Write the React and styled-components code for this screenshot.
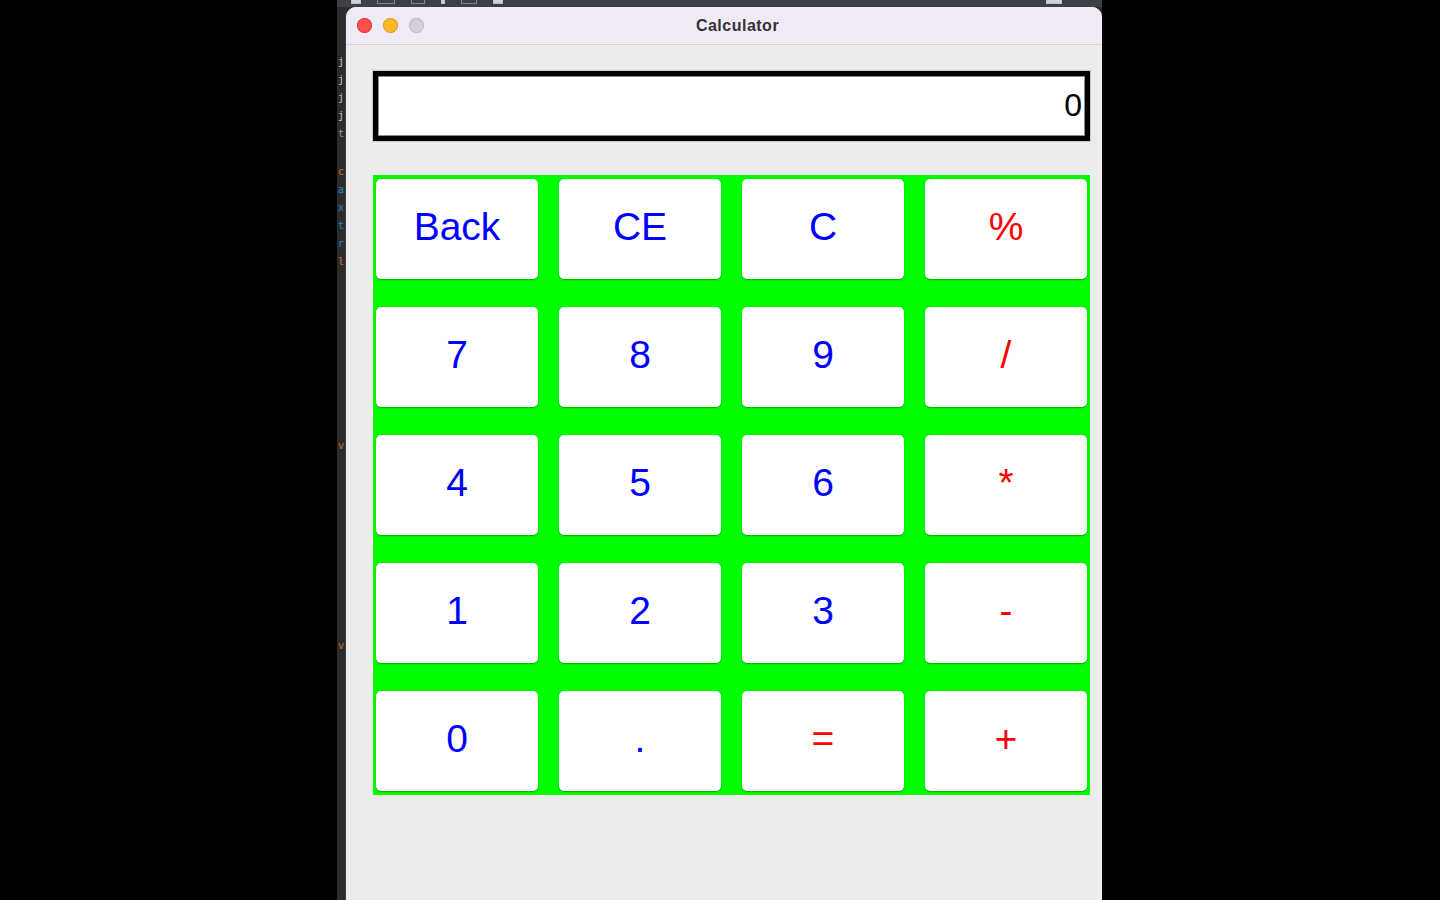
import React, { useState } from 'react';
import styled, { createGlobalStyle } from 'styled-components';

const GlobalStyle = createGlobalStyle`
  html, body {
    margin: 0;
    padding: 0;
    background: #000000;
    overflow: hidden;
  }
  * {
    box-sizing: border-box;
  }
`;

const KEYS = [
  { label: 'Back', op: false },
  { label: 'CE', op: false },
  { label: 'C', op: false },
  { label: '%', op: true },
  { label: '7', op: false },
  { label: '8', op: false },
  { label: '9', op: false },
  { label: '/', op: true },
  { label: '4', op: false },
  { label: '5', op: false },
  { label: '6', op: false },
  { label: '*', op: true },
  { label: '1', op: false },
  { label: '2', op: false },
  { label: '3', op: false },
  { label: '-', op: true },
  { label: '0', op: false },
  { label: '.', op: false },
  { label: '=', op: true },
  { label: '+', op: true },
];

// bits of the code editor peeking out behind the window
const EDITOR_LINES = [
  { top: 48, text: 'j', color: '#c8c8c8' },
  { top: 66, text: 'j', color: '#c8c8c8' },
  { top: 84, text: 'j', color: '#c8c8c8' },
  { top: 102, text: 'j', color: '#c8c8c8' },
  { top: 120, text: 't', color: '#9a9a9a' },
  { top: 158, text: 'c', color: '#cc7832' },
  { top: 176, text: 'a', color: '#1d8cc4' },
  { top: 194, text: 'x', color: '#1d8cc4' },
  { top: 212, text: 't', color: '#1d8cc4' },
  { top: 230, text: 'r', color: '#1d8cc4' },
  { top: 248, text: 'l', color: '#cc7832' },
  { top: 432, text: 'v', color: '#cc7832' },
  { top: 632, text: 'v', color: '#cc7832' },
];

function App() {
  const [display] = useState('0');

  return (
    <>
      <GlobalStyle />
      <Desktop>
        <Screen>
          <Toolbar>
            <ToolIcon $w={10} $light />
            <ToolIcon $w={18} />
            <ToolIcon $w={14} />
            <ToolIcon $w={4} $light />
            <ToolIcon $w={16} />
            <ToolIcon $w={10} $light />
            <ToolSpacer />
            <ToolIcon $w={16} $light />
          </Toolbar>
          <Workspace>
            <EditorStrip>
              {EDITOR_LINES.map((line, i) => (
                <EditorLine key={i} $top={line.top} $color={line.color}>
                  {line.text}
                </EditorLine>
              ))}
            </EditorStrip>
            <Window>
              <TitleBar>
                <Lights>
                  <Light $color="#fe4f4b" $edge="#e2403c" />
                  <Light $color="#fdb92c" $edge="#e0a026" />
                  <Light $color="#d4d0d9" $edge="#bdb9c2" />
                </Lights>
                <Title>Calculator</Title>
              </TitleBar>
              <Content>
                <Display>{display}</Display>
                <Keypad>
                  {KEYS.map((key) => (
                    <Key key={key.label} $op={key.op}>
                      {key.label}
                    </Key>
                  ))}
                </Keypad>
              </Content>
            </Window>
          </Workspace>
        </Screen>
      </Desktop>
    </>
  );
}

export default App;

const Desktop = styled.div`
  width: 1440px;
  height: 900px;
  background: #000000;
  display: flex;
  padding-left: 337px;
`;

const Screen = styled.div`
  width: 765px;
  height: 900px;
  display: flex;
  flex-direction: column;
  background: #2b2b2b;
`;

const Toolbar = styled.div`
  height: 7px;
  background: #3c4146;
  display: flex;
  align-items: flex-start;
  gap: 16px;
  padding-left: 14px;
  padding-right: 40px;
  overflow: hidden;
`;

const ToolIcon = styled.span`
  width: ${(p) => p.$w}px;
  height: 4px;
  border: 1px solid ${(p) => (p.$light ? '#b9c0c6' : '#7d8894')};
  border-top: none;
  background: ${(p) => (p.$light ? '#cfd4d8' : 'transparent')};
`;

const ToolSpacer = styled.span`
  flex: 1;
`;

const Workspace = styled.div`
  flex: 1;
  display: flex;
`;

const EditorStrip = styled.div`
  position: relative;
  width: 9px;
  background: #2b2b2b;
  border-right: 1px solid #3a3a3a;
  overflow: hidden;
`;

const EditorLine = styled.span`
  position: absolute;
  top: ${(p) => p.$top}px;
  left: 1px;
  font-family: 'DejaVu Sans Mono', monospace;
  font-size: 10px;
  line-height: 14px;
  color: ${(p) => p.$color};
  white-space: nowrap;
`;

const Window = styled.div`
  flex: 1;
  display: flex;
  flex-direction: column;
  background: #ececec;
  border-radius: 10px 10px 0 0;
  overflow: hidden;
`;

const TitleBar = styled.div`
  height: 38px;
  flex-shrink: 0;
  display: flex;
  align-items: center;
  padding-left: 11px;
  padding-right: 51px;
  background: #f0eaf6;
  border-bottom: 1px solid #d4d1d8;
`;

const Lights = styled.div`
  display: flex;
  gap: 11px;
`;

const Light = styled.span`
  width: 15px;
  height: 15px;
  border-radius: 50%;
  background: ${(p) => p.$color};
  box-shadow: inset 0 0 0 1px ${(p) => p.$edge};
`;

const Title = styled.div`
  flex: 1;
  text-align: center;
  font-family: 'Liberation Sans', Arial, sans-serif;
  font-weight: 700;
  font-size: 16px;
  letter-spacing: 0.5px;
  color: #333335;
`;

const Content = styled.div`
  display: flex;
  flex-direction: column;
  gap: 34px;
  padding: 26px 0 0 27px;
  width: 744px;
`;

const Display = styled.div`
  height: 70px;
  border: 5px solid #000000;
  background: #ffffff;
  box-shadow: 0 0 0 1px #c6c6c6, inset 0 0 0 1px #8a8a8a;
  display: flex;
  align-items: center;
  justify-content: flex-end;
  padding: 0 3px 2px 0;
  font-family: 'Liberation Sans', Arial, sans-serif;
  font-size: 32px;
  color: #000000;
`;

const Keypad = styled.div`
  display: grid;
  grid-template-columns: repeat(4, 162px);
  grid-auto-rows: 100px;
  column-gap: 21px;
  row-gap: 28px;
  padding: 4px 3px;
  background: #00ff00;
`;

const Key = styled.button`
  border: none;
  margin: 0;
  border-radius: 5px;
  background: #ffffff;
  box-shadow: 0 0.5px 1.5px rgba(0, 0, 0, 0.35);
  display: flex;
  align-items: center;
  justify-content: center;
  padding: 0 0 5px;
  font-family: 'Liberation Sans', Arial, sans-serif;
  font-size: 39px;
  line-height: 1;
  color: ${(p) => (p.$op ? '#ff0000' : '#0000ff')};
  cursor: pointer;
`;
